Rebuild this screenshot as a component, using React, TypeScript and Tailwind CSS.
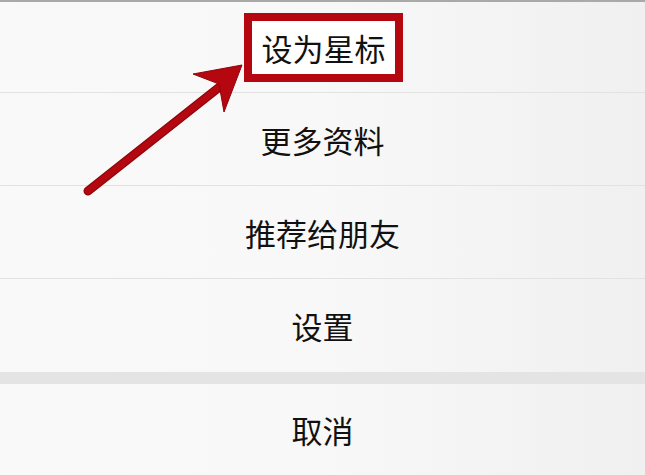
import React from "react";

const items = ["设为星标", "更多资料", "推荐给朋友", "设置"];

export default function App() {
  return (
    <div
      className="relative w-[645px] h-[475px] overflow-hidden bg-[#f7f7f7] text-[#111111]"
      style={{ fontFamily: '"Noto Sans CJK SC", "Noto Sans", sans-serif' }}
    >
      <div className="flex flex-col bg-gradient-to-r from-[#f9f9f9] via-[#f8f8f8] to-[#f0f0f0]">
        {items.map((label, i) => (
          <div
            key={label}
            className={
              i === 0
                ? "h-[93px] flex items-center justify-center border-t-2 border-t-[#a9a9a9] border-b border-b-[#e2e2e2]"
                : i === items.length - 1
                ? "h-[93px] flex items-center justify-center"
                : "h-[93px] flex items-center justify-center border-b border-b-[#e2e2e2]"
            }
          >
            {i === 0 ? (
              <span className="border-[8px] border-[#b5070f] bg-white ml-[2px] h-[69px] w-[159px] flex items-center justify-center text-[31px] leading-none">
                {label}
              </span>
            ) : (
              <span className="text-[31px] leading-none">{label}</span>
            )}
          </div>
        ))}
        <div className="h-[12px] bg-[#e4e4e4]" />
        <div className="h-[91px] flex items-center justify-center">
          <span className="text-[31px] leading-none">取消</span>
        </div>
      </div>

      {/* 箭头 */}
      <svg
        className="absolute left-0 top-0"
        width="645"
        height="475"
        viewBox="0 0 645 475"
      >
        <line
          x1="88"
          y1="191"
          x2="222"
          y2="85"
          stroke="#8e050c"
          strokeWidth="9"
          strokeLinecap="round"
        />
        <line
          x1="88"
          y1="191"
          x2="222"
          y2="85"
          stroke="#b5070f"
          strokeWidth="6.5"
          strokeLinecap="round"
        />
        <polygon
          points="242,65 193,74 219,84 224,112"
          fill="#b5070f"
          stroke="#8e050c"
          strokeWidth="1"
          strokeLinejoin="miter"
        />
      </svg>
    </div>
  );
}
